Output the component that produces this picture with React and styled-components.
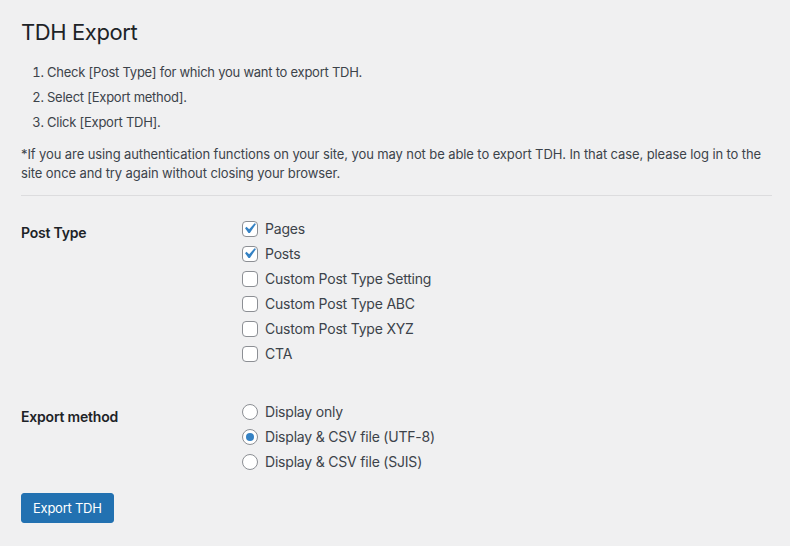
import styled, { createGlobalStyle } from 'styled-components';

const GlobalStyle = createGlobalStyle`
  html, body {
    margin: 0;
    padding: 0;
    background: #f0f0f1;
  }
  body {
    font-family: Inter, "Noto Sans", "Liberation Sans", sans-serif;
    font-size: 13px;
    line-height: 1.4;
    letter-spacing: -0.25px;
    color: #3c434a;
  }
`;

const Wrap = styled.div`
  padding: 10px 18px 20px 21px;
`;

const Title = styled.h1`
  margin: 0;
  padding: 7px 0 4px;
  font-size: 22px;
  line-height: 30px;
  font-weight: 400;
  letter-spacing: -0.4px;
  color: #1d2327;
`;

const Steps = styled.ol`
  margin: 12px 0 0;
  padding-left: 26px;
`;

const Step = styled.li`
  line-height: 19px;
  margin-bottom: 6px;
`;

const Note = styled.p`
  margin: 13px 0 0;
  line-height: 19px;
  letter-spacing: -0.1px;
`;

const Divider = styled.hr`
  margin: 12px 0 0;
  border: 0;
  border-top: 1px solid #dcdcde;
`;

const Section = styled.div`
  display: flex;
  margin-top: ${({ $gap }) => $gap || 0}px;
`;

const FieldLabel = styled.div`
  width: 221px;
  flex-shrink: 0;
  padding-top: ${({ $top }) => $top}px;
  font-size: 14px;
  line-height: 20px;
  font-weight: 600;
  letter-spacing: -0.2px;
  color: #1d2327;
`;

const Options = styled.div`
  display: flex;
  flex-direction: column;
  padding-top: ${({ $top }) => $top}px;
`;

const Option = styled.label`
  display: flex;
  align-items: center;
  gap: 7px;
  height: 25px;
  font-size: 14px;
  letter-spacing: -0.2px;
  color: #3c434a;
`;

const Box = styled.span`
  position: relative;
  width: 16px;
  height: 16px;
  box-sizing: border-box;
  border: 1px solid #8c8f94;
  border-radius: ${({ $round }) => ($round ? '50%' : '4px')};
  background: #fff;
  flex-shrink: 0;
`;

const Tick = styled.svg`
  position: absolute;
  left: -4px;
  top: -4px;
  width: 21px;
  height: 21px;
`;

const Dot = styled.span`
  position: absolute;
  left: 3px;
  top: 3px;
  width: 8px;
  height: 8px;
  border-radius: 50%;
  background: #3582c4;
`;

const Button = styled.button`
  margin-top: 19px;
  height: 30px;
  padding: 0 11px;
  border: 1px solid #2271b1;
  border-radius: 3px;
  background: #2271b1;
  color: #fff;
  font-family: inherit;
  font-size: 13px;
  letter-spacing: -0.25px;
  cursor: pointer;
`;

function Checkbox({ checked, children }) {
  return (
    <Option>
      <Box>
        {checked && (
          <Tick viewBox="0 0 20 20">
            <path d="M14.83 4.89l1.34.94-5.81 8.38H9.02L5.78 9.67l1.34-1.25 2.57 2.4z" fill="#3582c4" />
          </Tick>
        )}
      </Box>
      {children}
    </Option>
  );
}

function Radio({ checked, children }) {
  return (
    <Option>
      <Box $round>{checked && <Dot />}</Box>
      {children}
    </Option>
  );
}

const postTypes = [
  { name: 'Pages', checked: true },
  { name: 'Posts', checked: true },
  { name: 'Custom Post Type Setting' },
  { name: 'Custom Post Type ABC' },
  { name: 'Custom Post Type XYZ' },
  { name: 'CTA' },
];

const methods = [
  { name: 'Display only' },
  { name: 'Display & CSV file (UTF-8)', checked: true },
  { name: 'Display & CSV file (SJIS)' },
];

export default function App() {
  return (
    <>
      <GlobalStyle />
      <Wrap>
        <Title>TDH Export</Title>
        <Steps>
          <Step>Check [Post Type] for which you want to export TDH.</Step>
          <Step>Select [Export method].</Step>
          <Step>Click [Export TDH].</Step>
        </Steps>
        <Note>
          *If you are using authentication functions on your site, you may not be able to export TDH. In that case,
          please log in to the site once and try again without closing your browser.
        </Note>
        <Divider />
        <Section>
          <FieldLabel $top={27}>Post Type</FieldLabel>
          <Options $top={20}>
            {postTypes.map((p) => (
              <Checkbox key={p.name} checked={p.checked}>{p.name}</Checkbox>
            ))}
          </Options>
        </Section>
        <Section $gap={15}>
          <FieldLabel $top={26}>Export method</FieldLabel>
          <Options $top={18}>
            {methods.map((m) => (
              <Radio key={m.name} checked={m.checked}>{m.name}</Radio>
            ))}
          </Options>
        </Section>
        <Button>Export TDH</Button>
      </Wrap>
    </>
  );
}
